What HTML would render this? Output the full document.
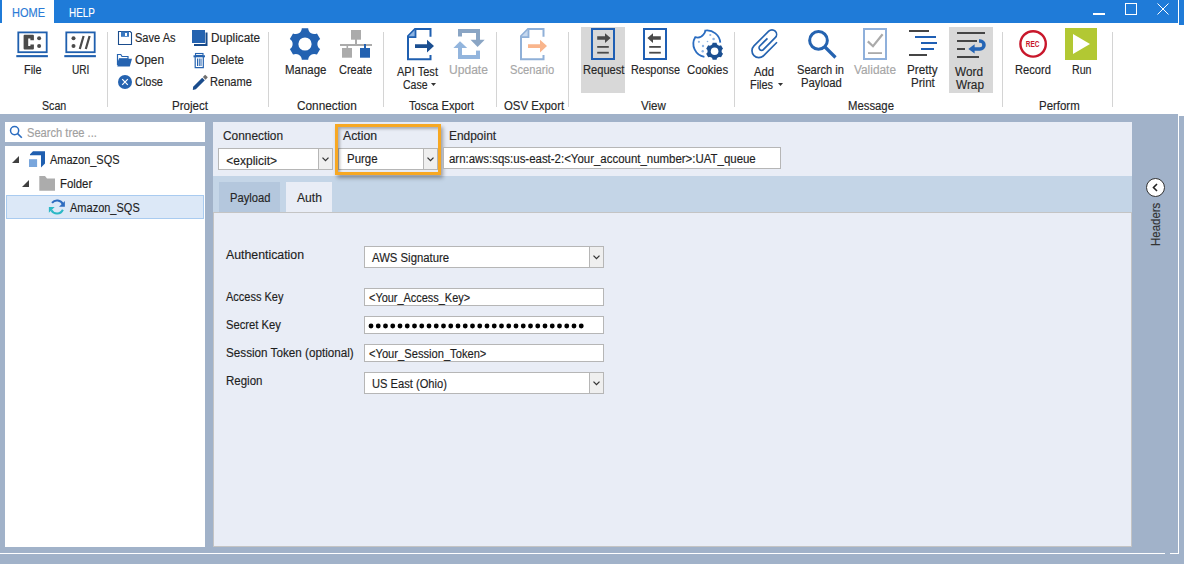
<!DOCTYPE html><html><head><meta charset="utf-8"><style>
html,body{margin:0;padding:0;width:1184px;height:564px;overflow:hidden;background:#a1b2c9}
body{position:relative;font-family:"Liberation Sans",sans-serif}
.t{position:absolute;white-space:nowrap;font-size:12px;line-height:14px;transform-origin:0 0;-webkit-text-stroke:0.15px currentColor}
</style></head><body>
<div style="position:absolute;left:0px;top:0px;width:1184px;height:23px;background:#1f7bd8"></div>
<div style="position:absolute;left:2px;top:0px;width:52px;height:23px;background:#fff"></div>
<div style="position:absolute;left:1178px;top:0px;width:6px;height:25px;background:#1f7bd8"></div>
<div style="position:absolute;left:1178px;top:0px;width:1px;height:553px;background:#fff"></div>
<div class="t" style="left:12.00px;top:6.00px;color:#2b7bd6;font-size:12px;transform:scaleX(0.9167);">HOME</div>
<div class="t" style="left:69.00px;top:6.00px;color:#fff;font-size:12px;transform:scaleX(0.8224);">HELP</div>
<div style="position:absolute;left:1093px;top:13px;width:12px;height:1.5px;background:#fff"></div>
<div style="position:absolute;left:1125px;top:3px;width:12px;height:12px;border:1px solid #fff;box-sizing:border-box"></div>
<svg style="position:absolute;left:1157px;top:3px" width="12" height="12" viewBox="0 0 12 12"><path d="M0.5 0.5L11.5 11.5M11.5 0.5L0.5 11.5" stroke="#fff" stroke-width="1"/></svg>
<div style="position:absolute;left:0px;top:23px;width:1178px;height:91px;background:#fff"></div>
<div style="position:absolute;left:1179px;top:25px;width:5px;height:91px;background:#fff"></div>
<div style="position:absolute;left:1179px;top:116px;width:5px;height:448px;background:#a1b2c9"></div>
<div style="position:absolute;left:107px;top:32px;width:1px;height:75px;background:#d4d4d4"></div>
<div style="position:absolute;left:268px;top:32px;width:1px;height:75px;background:#d4d4d4"></div>
<div style="position:absolute;left:383px;top:32px;width:1px;height:75px;background:#d4d4d4"></div>
<div style="position:absolute;left:496px;top:32px;width:1px;height:75px;background:#d4d4d4"></div>
<div style="position:absolute;left:568px;top:32px;width:1px;height:75px;background:#d4d4d4"></div>
<div style="position:absolute;left:734px;top:32px;width:1px;height:75px;background:#d4d4d4"></div>
<div style="position:absolute;left:1002px;top:32px;width:1px;height:75px;background:#d4d4d4"></div>
<div style="position:absolute;left:1112px;top:32px;width:1px;height:75px;background:#d4d4d4"></div>
<div style="position:absolute;left:581px;top:27px;width:44px;height:66px;background:#d8d8d8"></div>
<div style="position:absolute;left:949px;top:27px;width:44px;height:66px;background:#d8d8d8"></div>
<div class="t" style="left:42.00px;top:99.00px;color:#262626;font-size:12px;transform:scaleX(0.8881);">Scan</div>
<div class="t" style="left:171.50px;top:99.00px;color:#262626;font-size:12px;transform:scaleX(0.9664);">Project</div>
<div class="t" style="left:297.20px;top:99.00px;color:#262626;font-size:12px;transform:scaleX(0.9844);">Connection</div>
<div class="t" style="left:409.00px;top:99.00px;color:#262626;font-size:12px;transform:scaleX(0.9353);">Tosca Export</div>
<div class="t" style="left:503.50px;top:99.00px;color:#262626;font-size:12px;transform:scaleX(0.9486);">OSV Export</div>
<div class="t" style="left:640.75px;top:99.00px;color:#262626;font-size:12px;transform:scaleX(0.9615);">View</div>
<div class="t" style="left:847.50px;top:99.00px;color:#262626;font-size:12px;transform:scaleX(0.9436);">Message</div>
<div class="t" style="left:1038.50px;top:99.00px;color:#262626;font-size:12px;transform:scaleX(0.9532);">Perform</div>
<div class="t" style="left:23.50px;top:63.00px;color:#262626;font-size:12px;transform:scaleX(0.9091);">File</div>
<div class="t" style="left:71.50px;top:63.00px;color:#262626;font-size:12px;transform:scaleX(0.8434);">URI</div>
<div class="t" style="left:135.00px;top:31.00px;color:#262626;font-size:12px;transform:scaleX(0.9205);">Save As</div>
<div class="t" style="left:135.00px;top:53.00px;color:#262626;font-size:12px;transform:scaleX(0.9915);">Open</div>
<div class="t" style="left:135.00px;top:75.00px;color:#262626;font-size:12px;transform:scaleX(0.9106);">Close</div>
<div class="t" style="left:210.50px;top:31.00px;color:#262626;font-size:12px;transform:scaleX(0.9800);">Duplicate</div>
<div class="t" style="left:210.50px;top:53.00px;color:#262626;font-size:12px;transform:scaleX(0.9496);">Delete</div>
<div class="t" style="left:210.20px;top:75.00px;color:#262626;font-size:12px;transform:scaleX(0.9238);">Rename</div>
<div class="t" style="left:284.50px;top:63.00px;color:#262626;font-size:12px;transform:scaleX(0.9540);">Manage</div>
<div class="t" style="left:339.00px;top:63.00px;color:#262626;font-size:12px;transform:scaleX(0.9167);">Create</div>
<div class="t" style="left:397.00px;top:65.00px;color:#262626;font-size:12px;transform:scaleX(0.9213);">API Test</div>
<div class="t" style="left:402.50px;top:78.00px;color:#262626;font-size:12px;transform:scaleX(0.8750);">Case</div>
<div class="t" style="left:449.00px;top:63.00px;color:#a6a6a6;font-size:12px;transform:scaleX(1.0065);">Update</div>
<div class="t" style="left:510.00px;top:63.00px;color:#a6a6a6;font-size:12px;transform:scaleX(0.9312);">Scenario</div>
<div class="t" style="left:582.50px;top:63.00px;color:#262626;font-size:12px;transform:scaleX(0.9274);">Request</div>
<div class="t" style="left:631.00px;top:63.00px;color:#262626;font-size:12px;transform:scaleX(0.9074);">Response</div>
<div class="t" style="left:687.00px;top:63.00px;color:#262626;font-size:12px;transform:scaleX(0.9480);">Cookies</div>
<div class="t" style="left:754.00px;top:65.00px;color:#262626;font-size:12px;transform:scaleX(0.9412);">Add</div>
<div class="t" style="left:750.00px;top:78.00px;color:#262626;font-size:12px;transform:scaleX(0.9109);">Files</div>
<div class="t" style="left:797.00px;top:63.00px;color:#262626;font-size:12px;transform:scaleX(0.9261);">Search in</div>
<div class="t" style="left:801.00px;top:76.00px;color:#262626;font-size:12px;transform:scaleX(0.9425);">Payload</div>
<div class="t" style="left:854.00px;top:63.00px;color:#a6a6a6;font-size:12px;transform:scaleX(0.9882);">Validate</div>
<div class="t" style="left:906.50px;top:63.00px;color:#262626;font-size:12px;transform:scaleX(0.9728);">Pretty</div>
<div class="t" style="left:910.50px;top:76.00px;color:#262626;font-size:12px;transform:scaleX(0.9657);">Print</div>
<div class="t" style="left:955.00px;top:65.00px;color:#262626;font-size:12px;transform:scaleX(0.9825);">Word</div>
<div class="t" style="left:956.00px;top:78.00px;color:#262626;font-size:12px;transform:scaleX(0.9825);">Wrap</div>
<div class="t" style="left:1015.00px;top:63.00px;color:#262626;font-size:12px;transform:scaleX(0.9290);">Record</div>
<div class="t" style="left:1071.50px;top:63.00px;color:#262626;font-size:12px;transform:scaleX(0.8864);">Run</div>
<svg style="position:absolute;left:431px;top:83px" width="5" height="3" viewBox="0 0 5 3"><path d="M0 0H5L2.5 3Z" fill="#333"/></svg>
<svg style="position:absolute;left:778px;top:83px" width="5" height="3" viewBox="0 0 5 3"><path d="M0 0H5L2.5 3Z" fill="#333"/></svg>
<svg style="position:absolute;left:16px;top:31px" width="33" height="27" viewBox="0 0 33 27"><rect x="2.3" y="1.4" width="28.4" height="19.8" fill="#fff" stroke="#1f5fae" stroke-width="1.8"/><rect x="0.3" y="24.1" width="31.6" height="2.1" fill="#1f5fae"/><path fill="#4b4b4b" d="M7.6 4.8Q7.6 3.8 8.6 3.8H16.9Q17.9 3.8 17.9 4.8V9.2H14.4V7.5H12.2V15H14.4V13.4H17.9V17.6Q17.9 18.6 16.9 18.6H8.6Q7.6 18.6 7.6 17.6Z"/><circle cx="23.1" cy="7.2" r="2" fill="#4b4b4b"/><circle cx="23.1" cy="15" r="2" fill="#4b4b4b"/></svg>
<svg style="position:absolute;left:64px;top:31px" width="33" height="27" viewBox="0 0 33 27"><rect x="2.3" y="1.4" width="28.4" height="19.8" fill="#fff" stroke="#1f5fae" stroke-width="1.8"/><rect x="0.3" y="24.1" width="31.6" height="2.1" fill="#1f5fae"/><circle cx="9.5" cy="7.2" r="2" fill="#4b4b4b"/><circle cx="9.5" cy="15" r="2" fill="#4b4b4b"/><path d="M15.8 18L19.6 5M21.8 18L25.6 5" stroke="#4b4b4b" stroke-width="2.2"/></svg>
<svg style="position:absolute;left:117px;top:30px" width="16" height="16" viewBox="0 0 16 16"><path d="M1.5 1.5H13.2L14.5 2.8V14.5H1.5Z" fill="#fff" stroke="#1a4c8c" stroke-width="1.1"/><rect x="4" y="1.5" width="8" height="5.3" fill="#3a78c0"/><rect x="8" y="3" width="2" height="3" fill="#fff"/></svg>
<svg style="position:absolute;left:116px;top:53px" width="18" height="15" viewBox="0 0 18 15"><path d="M1.5 1.5H4.8L6 3.5H12V5.8H3.5L1.5 12Z" fill="none" stroke="#2563b0" stroke-width="1.2"/><path d="M1.3 13.5L3.2 5.8H16L13.8 13.5Z" fill="#2563b0"/></svg>
<svg style="position:absolute;left:117px;top:74px" width="16" height="16" viewBox="0 0 16 16"><circle cx="8" cy="8" r="7" fill="#2563b0"/><path d="M5.2 5.2L10.8 10.8M10.8 5.2L5.2 10.8" stroke="#fff" stroke-width="1.2"/></svg>
<svg style="position:absolute;left:191px;top:29px" width="18" height="18" viewBox="0 0 18 18"><path d="M15.5 3.5V16H3" fill="none" stroke="#174a8a" stroke-width="2"/><rect x="1" y="1" width="13" height="13" fill="#2563b0"/></svg>
<svg style="position:absolute;left:193px;top:52px" width="13" height="17" viewBox="0 0 13 17"><rect x="2.5" y="1.5" width="7.5" height="2" fill="none" stroke="#2563b0" stroke-width="1.1"/><rect x="0.5" y="3.3" width="11.5" height="2" fill="#2563b0"/><path d="M2.2 5V15.6H10.3V5" fill="none" stroke="#2563b0" stroke-width="1.2"/><path d="M4.5 6.5V14M6.25 6.5V14M8 6.5V14" stroke="#2563b0" stroke-width="1"/></svg>
<svg style="position:absolute;left:192px;top:74px" width="17" height="17" viewBox="0 0 17 17"><path d="M1.16 12.66L10.16 3.66L12.84 6.34L3.84 15.34L0.8 15.9Z" fill="#1a4c8c"/><path d="M10.86 2.96L13.16 0.66L15.84 3.34L13.54 5.64Z" fill="#6f6f6f"/></svg>
<svg style="position:absolute;left:286px;top:26px" width="38" height="38" viewBox="0 0 38 38"><path d="M15.81 2.32L22.19 2.32A6 6 0 0 0 30.98 7.40L30.98 7.40L34.17 12.92A6 6 0 0 0 34.17 23.08L34.17 23.08L30.98 28.60A6 6 0 0 0 22.19 33.68L22.19 33.68L15.81 33.68A6 6 0 0 0 7.02 28.60L7.02 28.60L3.83 23.08A6 6 0 0 0 3.83 12.92L3.83 12.92L7.02 7.40A6 6 0 0 0 15.81 2.32Z" fill="#2362b1"/><circle cx="19" cy="18" r="6.6" fill="#fff"/></svg>
<svg style="position:absolute;left:338px;top:28px" width="36" height="32" viewBox="0 0 36 32"><g fill="#ababab"><rect x="13" y="2" width="10" height="9.7"/><rect x="17" y="11" width="2" height="6"/><rect x="2" y="16" width="32" height="2"/><rect x="4" y="20" width="10" height="9.7"/><rect x="8.5" y="17" width="1.6" height="3.5"/></g><rect x="22" y="20" width="10" height="9.7" fill="#2362b1"/><rect x="26" y="16" width="2" height="4.5" fill="#2362b1"/></svg>
<svg style="position:absolute;left:407px;top:28px" width="30" height="33" viewBox="0 0 30 33"><path d="M23.5 8.8V1H8L1 8.1V31.2H23.5V27" fill="none" stroke="#1f5fb0" stroke-width="2" stroke-linejoin="miter"/><path d="M1.5 8.6L8.5 1.5V9.2H1.5Z" fill="#8db4e2"/><path d="M8.5 1.5V9.2H1" fill="none" stroke="#1f5fb0" stroke-width="1.8"/><path d="M8 16.2H20V11.8L27 18L20 24.6V19.9H8Z" fill="#1b4f91"/></svg>
<svg style="position:absolute;left:520px;top:28px" width="30" height="33" viewBox="0 0 30 33"><path d="M23.5 8.8V1H8L1 8.1V31.2H23.5V27" fill="none" stroke="#8fb0d8" stroke-width="2" stroke-linejoin="miter"/><path d="M1.5 8.6L8.5 1.5V9.2H1.5Z" fill="#c5d8ef"/><path d="M8.5 1.5V9.2H1" fill="none" stroke="#8fb0d8" stroke-width="1.8"/><path d="M8 16.2H20V11.8L27 18L20 24.6V19.9H8Z" fill="#f9b58c"/></svg>
<svg style="position:absolute;left:452px;top:28px" width="34" height="33" viewBox="0 0 34 33"><g fill="#8aa5c4"><rect x="6" y="1" width="22" height="4"/><rect x="6" y="1" width="4" height="7.5"/><rect x="24" y="1" width="4" height="12"/><path d="M18.5 11.8H32.7L25.6 18.9Z"/></g><g fill="#93b5dd"><rect x="6" y="27" width="22" height="4"/><rect x="6" y="19.5" width="4" height="11.5"/><rect x="24" y="22.6" width="4" height="8.4"/><path d="M1.4 19.9H15.2L8 13.2Z"/></g></svg>
<svg style="position:absolute;left:590px;top:27px" width="26" height="34" viewBox="0 0 26 34"><rect x="2" y="2" width="22" height="30" fill="none" stroke="#1f5fb4" stroke-width="2"/><path d="M7.2 9.2H15V6.3L20.6 11L15 15.9V12.7H7.2Z" fill="#4a4a4a"/><rect x="7.2" y="19" width="11.6" height="1.8" fill="#4a4a4a"/><rect x="7.2" y="24.8" width="11.6" height="1.8" fill="#4a4a4a"/></svg>
<svg style="position:absolute;left:642px;top:27px" width="26" height="34" viewBox="0 0 26 34"><rect x="2" y="2" width="22" height="30" fill="none" stroke="#1f5fb4" stroke-width="2"/><path d="M18.8 9.2H11V6.3L5.4 11L11 15.9V12.7H18.8Z" fill="#4a4a4a"/><rect x="7.2" y="19" width="11.6" height="1.8" fill="#4a4a4a"/><rect x="7.2" y="24.8" width="11.6" height="1.8" fill="#4a4a4a"/></svg>
<svg style="position:absolute;left:690px;top:26px" width="38" height="38" viewBox="0 0 38 38"><path d="M14.4 30.9A13.2 13.2 0 0 1 5.2 11.2Q10.5 12.6 13.5 8.5Q15.2 6.5 15.3 4.6A13.3 13.3 0 0 1 30.3 16.6" fill="none" stroke="#2a6cc0" stroke-width="1.8"/><g fill="#8fb4e3"><circle cx="8.9" cy="15.8" r="1.1"/><circle cx="20.3" cy="9" r="1.1"/><circle cx="23.6" cy="13" r="1.3"/><circle cx="17.5" cy="15.5" r="0.8"/><circle cx="13" cy="20" r="1.2"/><circle cx="12.7" cy="25.2" r="1.2"/></g><path d="M22.62 16.73L26.58 16.73A3.0 3.0 0 0 0 31.04 19.30L31.04 19.30L33.02 22.73A3.0 3.0 0 0 0 33.02 27.87L33.02 27.87L31.04 31.30A3.0 3.0 0 0 0 26.58 33.87L26.58 33.87L22.62 33.87A3.0 3.0 0 0 0 18.16 31.30L18.16 31.30L16.18 27.87A3.0 3.0 0 0 0 16.18 22.73L16.18 22.73L18.16 19.30A3.0 3.0 0 0 0 22.62 16.73Z" fill="#1b4f91"/><circle cx="24.6" cy="25.3" r="3.8" fill="#fff"/></svg>
<svg style="position:absolute;left:748px;top:26px" width="34" height="36" viewBox="0 0 34 36"><path transform="matrix(0.7071,-0.7071,0.7071,0.7071,10.82,24.75)" d="M18.85 6.85H0A6.85 6.85 0 0 1 0 -6.85H20.85A4.6 4.6 0 0 1 20.85 2.35H4.05A2.5 2.5 0 0 1 4.05 -2.65H14.85" fill="none" stroke="#2563b0" stroke-width="1.7"/></svg>
<svg style="position:absolute;left:804px;top:26px" width="36" height="36" viewBox="0 0 36 36"><circle cx="14.5" cy="14.4" r="8.85" fill="none" stroke="#2563b0" stroke-width="3"/><path d="M21 21L31.5 31.5" stroke="#2563b0" stroke-width="3.2"/></svg>
<svg style="position:absolute;left:862px;top:27px" width="26" height="34" viewBox="0 0 26 34"><rect x="2" y="2" width="22" height="30" fill="none" stroke="#8fb0db" stroke-width="2"/><path d="M5.8 14.4L11 19.2L20.6 7.3" fill="none" stroke="#aaaaaa" stroke-width="2.2"/><rect x="6" y="25.2" width="14" height="1.8" fill="#aaaaaa"/></svg>
<svg style="position:absolute;left:908px;top:28px" width="32" height="30" viewBox="0 0 32 30"><rect x="1" y="2" width="20" height="2" fill="#454545"/><rect x="7" y="8" width="21" height="2" fill="#1f5fb4"/><rect x="13" y="14" width="16" height="2" fill="#1f5fb4"/><rect x="13" y="20" width="13" height="2" fill="#1f5fb4"/><rect x="1" y="26" width="18" height="2" fill="#454545"/></svg>
<svg style="position:absolute;left:952px;top:26px" width="36" height="36" viewBox="0 0 36 36"><g fill="#454545"><rect x="5" y="6" width="28" height="2"/><rect x="5" y="14" width="20" height="2"/><rect x="5" y="22" width="8" height="2"/><rect x="5" y="30" width="22" height="2"/></g><path d="M27 15H28A4 4 0 0 1 28 23H21" fill="none" stroke="#2565b5" stroke-width="3.5"/><path d="M16.3 23L22.6 18.2V27.6Z" fill="#2565b5"/></svg>
<svg style="position:absolute;left:1016px;top:26px" width="36" height="36" viewBox="0 0 36 36"><circle cx="17.1" cy="17.9" r="12.7" fill="#fff" stroke="#c8172b" stroke-width="2.4"/><text x="16.6" y="20.9" text-anchor="middle" font-family="Liberation Sans" font-weight="bold" font-size="8.6" fill="#c8172b" textLength="13.8" lengthAdjust="spacingAndGlyphs">REC</text></svg>
<svg style="position:absolute;left:1065px;top:28px" width="32" height="32" viewBox="0 0 32 32"><rect width="32" height="32" fill="#b2c833"/><path d="M8 6V26L25 16Z" fill="#fff"/></svg>
<div style="position:absolute;left:0px;top:114px;width:1178px;height:450px;background:#a1b2c9"></div>
<div style="position:absolute;left:0px;top:553px;width:1165px;height:1px;background:#fff"></div>
<div style="position:absolute;left:1170px;top:553px;width:9px;height:1px;background:#fff"></div>
<div style="position:absolute;left:5px;top:122px;width:200px;height:20px;background:#fff"></div>
<div style="position:absolute;left:5px;top:146px;width:200px;height:401px;background:#fff"></div>
<div class="t" style="left:27.00px;top:126.00px;color:#a0a0a0;font-size:12px;transform:scaleX(0.9272);">Search tree ...</div>
<div style="position:absolute;left:6px;top:195px;width:198px;height:24px;background:#dce8f7;border:1px solid #a9cbf0;box-sizing:border-box"></div>
<div class="t" style="left:50.30px;top:153.00px;color:#1e1e1e;font-size:12px;transform:scaleX(0.9145);">Amazon_SQS</div>
<div class="t" style="left:60.30px;top:177.00px;color:#1e1e1e;font-size:12px;transform:scaleX(0.9471);">Folder</div>
<div class="t" style="left:69.80px;top:201.00px;color:#1e1e1e;font-size:12px;transform:scaleX(0.9171);">Amazon_SQS</div>
<svg style="position:absolute;left:12px;top:156px" width="7" height="7" viewBox="0 0 7 7"><path d="M7 0V7H0Z" fill="#404040"/></svg>
<svg style="position:absolute;left:22px;top:180px" width="7" height="7" viewBox="0 0 7 7"><path d="M7 0V7H0Z" fill="#404040"/></svg>
<div style="position:absolute;left:213px;top:122px;width:919px;height:425px;background:#e9edf6"></div>
<div style="position:absolute;left:213px;top:176px;width:919px;height:36px;background:#c4d5e7"></div>
<div style="position:absolute;left:219px;top:182px;width:61px;height:30px;background:#b4c7dd"></div>
<div style="position:absolute;left:286px;top:182px;width:46px;height:30px;background:#e9edf6"></div>
<div style="position:absolute;left:213px;top:212px;width:919px;height:335px;border:1px solid #c4c4c4;box-sizing:border-box"></div>
<div class="t" style="left:223.10px;top:129.00px;color:#262626;font-size:12px;transform:scaleX(0.9893);">Connection</div>
<div class="t" style="left:343.00px;top:129.00px;color:#262626;font-size:12px;transform:scaleX(1.0226);">Action</div>
<div class="t" style="left:448.60px;top:129.00px;color:#262626;font-size:12px;transform:scaleX(0.9937);">Endpoint</div>
<div class="t" style="left:229.50px;top:191.00px;color:#262626;font-size:12px;transform:scaleX(0.9310);">Payload</div>
<div class="t" style="left:296.50px;top:191.00px;color:#262626;font-size:12px;transform:scaleX(1.0101);">Auth</div>
<svg style="position:absolute;left:9px;top:125px" width="16" height="16" viewBox="0 0 16 16"><circle cx="5.6" cy="5.6" r="4.1" fill="none" stroke="#2a6cc0" stroke-width="1.5"/><path d="M8.6 8.6L12.8 12.8" stroke="#2a6cc0" stroke-width="1.6"/></svg>
<svg style="position:absolute;left:28px;top:150px" width="18" height="18" viewBox="0 0 18 18"><path d="M2 4.2L5 1.2H17V13.6L13 17.6V5.2H2Z" fill="#1f5fb0"/><rect x="1" y="9.2" width="8.1" height="7.8" fill="#79a6dc"/></svg>
<svg style="position:absolute;left:38px;top:175px" width="18" height="17" viewBox="0 0 18 17"><path d="M1.3 1.1H7L9 3.6H17V15.8H1.3Z" fill="#acacac"/></svg>
<svg style="position:absolute;left:44px;top:196px" width="26" height="22" viewBox="0 0 26 22"><path d="M8.02 6.82A6.5 6.5 0 0 1 18.89 8.25" fill="none" stroke="#2d6bc0" stroke-width="2"/><path d="M15 10.7H20.9V4.9Z" fill="#2d6bc0"/><path d="M18.89 13.75A6.5 6.5 0 0 1 7.37 14.25" fill="none" stroke="#2bb8c6" stroke-width="2"/><path d="M4.9 11.1H10.7L4.9 16.8Z" fill="#2bb8c6"/></svg>
<div style="position:absolute;left:335px;top:124px;width:106px;height:51px;box-shadow:2px 3px 4px rgba(0,0,0,0.35)"></div>
<div style="position:absolute;left:218px;top:148px;width:115px;height:22px;background:#fff;border:1px solid #b6b6b6;box-sizing:border-box"></div>
<div style="position:absolute;left:318px;top:148px;width:15px;height:22px;background:#efefef;border:1px solid #b6b6b6;box-sizing:border-box"></div>
<svg style="position:absolute;left:322px;top:157px" width="7" height="5" viewBox="0 0 7 5"><path d="M0.5 0.6L3.5 3.6L6.5 0.6" fill="none" stroke="#333" stroke-width="1.3"/></svg>
<div style="position:absolute;left:338px;top:148px;width:100px;height:22px;background:#fff;border:1px solid #b6b6b6;box-sizing:border-box"></div>
<div style="position:absolute;left:423px;top:148px;width:15px;height:22px;background:#efefef;border:1px solid #b6b6b6;box-sizing:border-box"></div>
<svg style="position:absolute;left:427px;top:157px" width="7" height="5" viewBox="0 0 7 5"><path d="M0.5 0.6L3.5 3.6L6.5 0.6" fill="none" stroke="#333" stroke-width="1.3"/></svg>
<div style="position:absolute;left:335px;top:124px;width:106px;height:51px;border:3px solid #f7a823;box-sizing:border-box;box-shadow:inset 2px 2px 3px rgba(0,0,0,0.28)"></div>
<div style="position:absolute;left:443px;top:147px;width:338px;height:22px;background:#fff;border:1px solid #b6b6b6;box-sizing:border-box"></div>
<div class="t" style="left:226.30px;top:154.00px;color:#1e1e1e;font-size:12px;">&lt;explicit&gt;</div>
<div class="t" style="left:346.50px;top:152.00px;color:#1e1e1e;font-size:12px;transform:scaleX(0.9531);">Purge</div>
<div class="t" style="left:448.50px;top:152.00px;color:#1e1e1e;font-size:12px;transform:scaleX(0.9540);">arn:aws:sqs:us-east-2:&lt;Your_account_number&gt;:UAT_queue</div>
<div style="position:absolute;left:364px;top:246px;width:240px;height:22px;background:#fff;border:1px solid #b6b6b6;box-sizing:border-box"></div>
<div style="position:absolute;left:589px;top:246px;width:15px;height:22px;background:#efefef;border:1px solid #b6b6b6;box-sizing:border-box"></div>
<svg style="position:absolute;left:593px;top:255px" width="7" height="5" viewBox="0 0 7 5"><path d="M0.5 0.6L3.5 3.6L6.5 0.6" fill="none" stroke="#333" stroke-width="1.3"/></svg>
<div style="position:absolute;left:364px;top:288px;width:240px;height:18px;background:#fff;border:1px solid #b6b6b6;box-sizing:border-box"></div>
<div style="position:absolute;left:364px;top:316px;width:240px;height:18px;background:#fff;border:1px solid #b6b6b6;box-sizing:border-box"></div>
<div style="position:absolute;left:364px;top:344px;width:240px;height:18px;background:#fff;border:1px solid #b6b6b6;box-sizing:border-box"></div>
<div style="position:absolute;left:364px;top:372px;width:240px;height:22px;background:#fff;border:1px solid #b6b6b6;box-sizing:border-box"></div>
<div style="position:absolute;left:589px;top:372px;width:15px;height:22px;background:#efefef;border:1px solid #b6b6b6;box-sizing:border-box"></div>
<svg style="position:absolute;left:593px;top:381px" width="7" height="5" viewBox="0 0 7 5"><path d="M0.5 0.6L3.5 3.6L6.5 0.6" fill="none" stroke="#333" stroke-width="1.3"/></svg>
<div class="t" style="left:226.00px;top:248.00px;color:#1e1e1e;font-size:12px;transform:scaleX(1.0263);">Authentication</div>
<div class="t" style="left:372.00px;top:251.00px;color:#1e1e1e;font-size:12px;transform:scaleX(0.9448);">AWS Signature</div>
<div class="t" style="left:226.00px;top:290.00px;color:#1e1e1e;font-size:12px;transform:scaleX(0.9163);">Access Key</div>
<div class="t" style="left:369.00px;top:291.00px;color:#1e1e1e;font-size:12px;transform:scaleX(0.9108);">&lt;Your_Access_Key&gt;</div>
<div class="t" style="left:226.00px;top:318.00px;color:#1e1e1e;font-size:12px;transform:scaleX(0.9362);">Secret Key</div>
<div class="t" style="left:226.00px;top:346.00px;color:#1e1e1e;font-size:12px;transform:scaleX(0.9737);">Session Token (optional)</div>
<div class="t" style="left:369.00px;top:347.00px;color:#1e1e1e;font-size:12px;transform:scaleX(0.9291);">&lt;Your_Session_Token&gt;</div>
<div class="t" style="left:225.80px;top:374.00px;color:#1e1e1e;font-size:12px;transform:scaleX(0.9579);">Region</div>
<div class="t" style="left:372.00px;top:377.00px;color:#1e1e1e;font-size:12px;transform:scaleX(0.9288);">US East (Ohio)</div>
<svg style="position:absolute;left:368px;top:323px" width="220" height="6" viewBox="0 0 220 6"><circle cx="3.00" cy="3" r="2.45" fill="#000"/><circle cx="10.25" cy="3" r="2.45" fill="#000"/><circle cx="17.50" cy="3" r="2.45" fill="#000"/><circle cx="24.75" cy="3" r="2.45" fill="#000"/><circle cx="32.00" cy="3" r="2.45" fill="#000"/><circle cx="39.25" cy="3" r="2.45" fill="#000"/><circle cx="46.50" cy="3" r="2.45" fill="#000"/><circle cx="53.75" cy="3" r="2.45" fill="#000"/><circle cx="61.00" cy="3" r="2.45" fill="#000"/><circle cx="68.25" cy="3" r="2.45" fill="#000"/><circle cx="75.50" cy="3" r="2.45" fill="#000"/><circle cx="82.75" cy="3" r="2.45" fill="#000"/><circle cx="90.00" cy="3" r="2.45" fill="#000"/><circle cx="97.25" cy="3" r="2.45" fill="#000"/><circle cx="104.50" cy="3" r="2.45" fill="#000"/><circle cx="111.75" cy="3" r="2.45" fill="#000"/><circle cx="119.00" cy="3" r="2.45" fill="#000"/><circle cx="126.25" cy="3" r="2.45" fill="#000"/><circle cx="133.50" cy="3" r="2.45" fill="#000"/><circle cx="140.75" cy="3" r="2.45" fill="#000"/><circle cx="148.00" cy="3" r="2.45" fill="#000"/><circle cx="155.25" cy="3" r="2.45" fill="#000"/><circle cx="162.50" cy="3" r="2.45" fill="#000"/><circle cx="169.75" cy="3" r="2.45" fill="#000"/><circle cx="177.00" cy="3" r="2.45" fill="#000"/><circle cx="184.25" cy="3" r="2.45" fill="#000"/><circle cx="191.50" cy="3" r="2.45" fill="#000"/><circle cx="198.75" cy="3" r="2.45" fill="#000"/><circle cx="206.00" cy="3" r="2.45" fill="#000"/><circle cx="213.25" cy="3" r="2.45" fill="#000"/></svg>
<svg style="position:absolute;left:1145px;top:177px" width="21" height="21" viewBox="0 0 21 21"><circle cx="10.5" cy="10.5" r="9" fill="#fff" stroke="#333" stroke-width="1"/><path d="M12 7L8.5 10.5L12 14" fill="none" stroke="#222" stroke-width="1.6"/></svg>
<div class="t" style="left:1149px;top:246px;color:#333;font-size:12px;transform-origin:0 0;transform:rotate(-90deg) scaleX(0.955)">Headers</div>
</body></html>
